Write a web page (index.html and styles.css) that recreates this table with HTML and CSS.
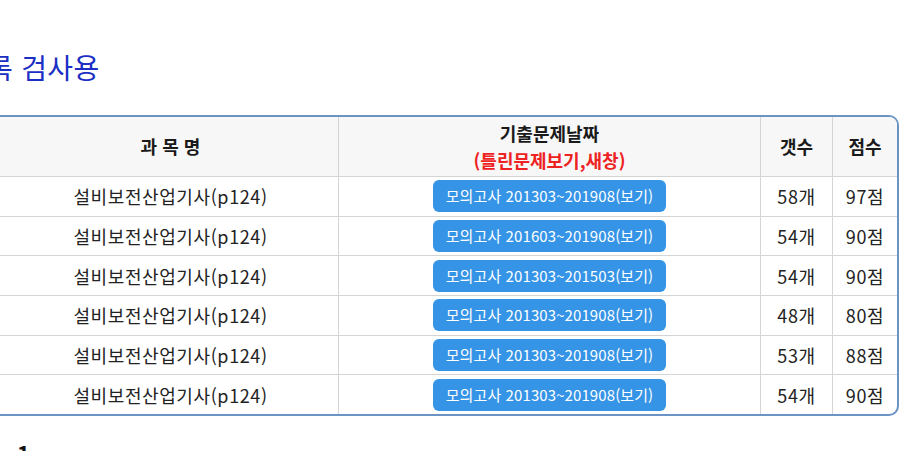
FILE: index.html
```html
<!DOCTYPE html>
<html lang="ko">
<head>
<meta charset="utf-8">
<link rel="stylesheet" href="styles.css">
</head>
<body>
<div class="page">
  <h2 class="title">기록 검사용</h2>
  <table class="grid">
    <colgroup>
      <col class="c1"><col class="c2"><col class="c3"><col class="c4">
    </colgroup>
    <thead>
      <tr>
        <th>과 목 명</th>
        <th>기출문제날짜<br><span class="red">(틀린문제보기,새창)</span></th>
        <th>갯수</th>
        <th>점수</th>
      </tr>
    </thead>
    <tbody>
      <tr><td>설비보전산업기사(p124)</td><td><a class="btn">모의고사 201303~201908(보기)</a></td><td>58개</td><td>97점</td></tr>
      <tr><td>설비보전산업기사(p124)</td><td><a class="btn">모의고사 201603~201908(보기)</a></td><td>54개</td><td>90점</td></tr>
      <tr><td>설비보전산업기사(p124)</td><td><a class="btn">모의고사 201303~201503(보기)</a></td><td>54개</td><td>90점</td></tr>
      <tr><td>설비보전산업기사(p124)</td><td><a class="btn">모의고사 201303~201908(보기)</a></td><td>48개</td><td>80점</td></tr>
      <tr><td>설비보전산업기사(p124)</td><td><a class="btn">모의고사 201303~201908(보기)</a></td><td>53개</td><td>88점</td></tr>
      <tr><td>설비보전산업기사(p124)</td><td><a class="btn">모의고사 201303~201908(보기)</a></td><td>54개</td><td>90점</td></tr>
    </tbody>
  </table>
  <div class="num">1</div>
</div>
</body>
</html>
```

FILE: styles.css
```css
html, body {
  margin: 0;
  padding: 0;
  background: #ffffff;
  overflow: hidden;
}
body {
  font-family: "Noto Sans CJK KR", "Noto Sans", sans-serif;
  color: #222;
}
.page {
  width: 911px;
  margin-left: -12px;
  padding-top: 47px;
}
.title {
  margin: 0 0 0 -27px;
  font-size: 28px;
  font-weight: 400;
  line-height: 40px;
  height: 40px;
  color: #1b2fc4;
  letter-spacing: 0.3px;
}
.grid {
  margin-top: 28px;
  width: 911px;
  border-collapse: separate;
  border-spacing: 0;
  border: 2px solid #6b93c4;
  border-radius: 10px;
  overflow: hidden;
  table-layout: fixed;
}
.c1 { width: 348px; }
.c2 { width: 422px; }
.c3 { width: 72px; }
.c4 { width: 65px; }
.grid th {
  background: #f7f7f7;
  height: 59px;
  padding: 0;
  font-size: 18px;
  font-weight: 700;
  line-height: 27px;
  color: #1a1a1a;
  border-bottom: 1px solid #d4d4d4;
  border-left: 1px solid #d4d4d4;
}
.grid th:first-child,
.grid td:first-child {
  border-left: none;
  padding-left: 13px;
}
.red { color: #ee2222; }
.grid td {
  height: 38.7px;
  padding: 0;
  text-align: center;
  font-size: 18px;
  letter-spacing: 0.6px;
  color: #222;
  border-bottom: 1px solid #d4d4d4;
  border-left: 1px solid #d4d4d4;
}
.grid tbody tr:last-child td { border-bottom: none; }
.btn {
  display: inline-block;
  width: 233px;
  height: 32px;
  line-height: 32px;
  background: #3594e6;
  color: #ffffff;
  border-radius: 6px;
  font-size: 15px;
  letter-spacing: 0.1px;
  vertical-align: middle;
}
.num {
  margin: 24px 0 0 29px;
  font-size: 22px;
  font-weight: 700;
  line-height: 26px;
  color: #111;
}
```
